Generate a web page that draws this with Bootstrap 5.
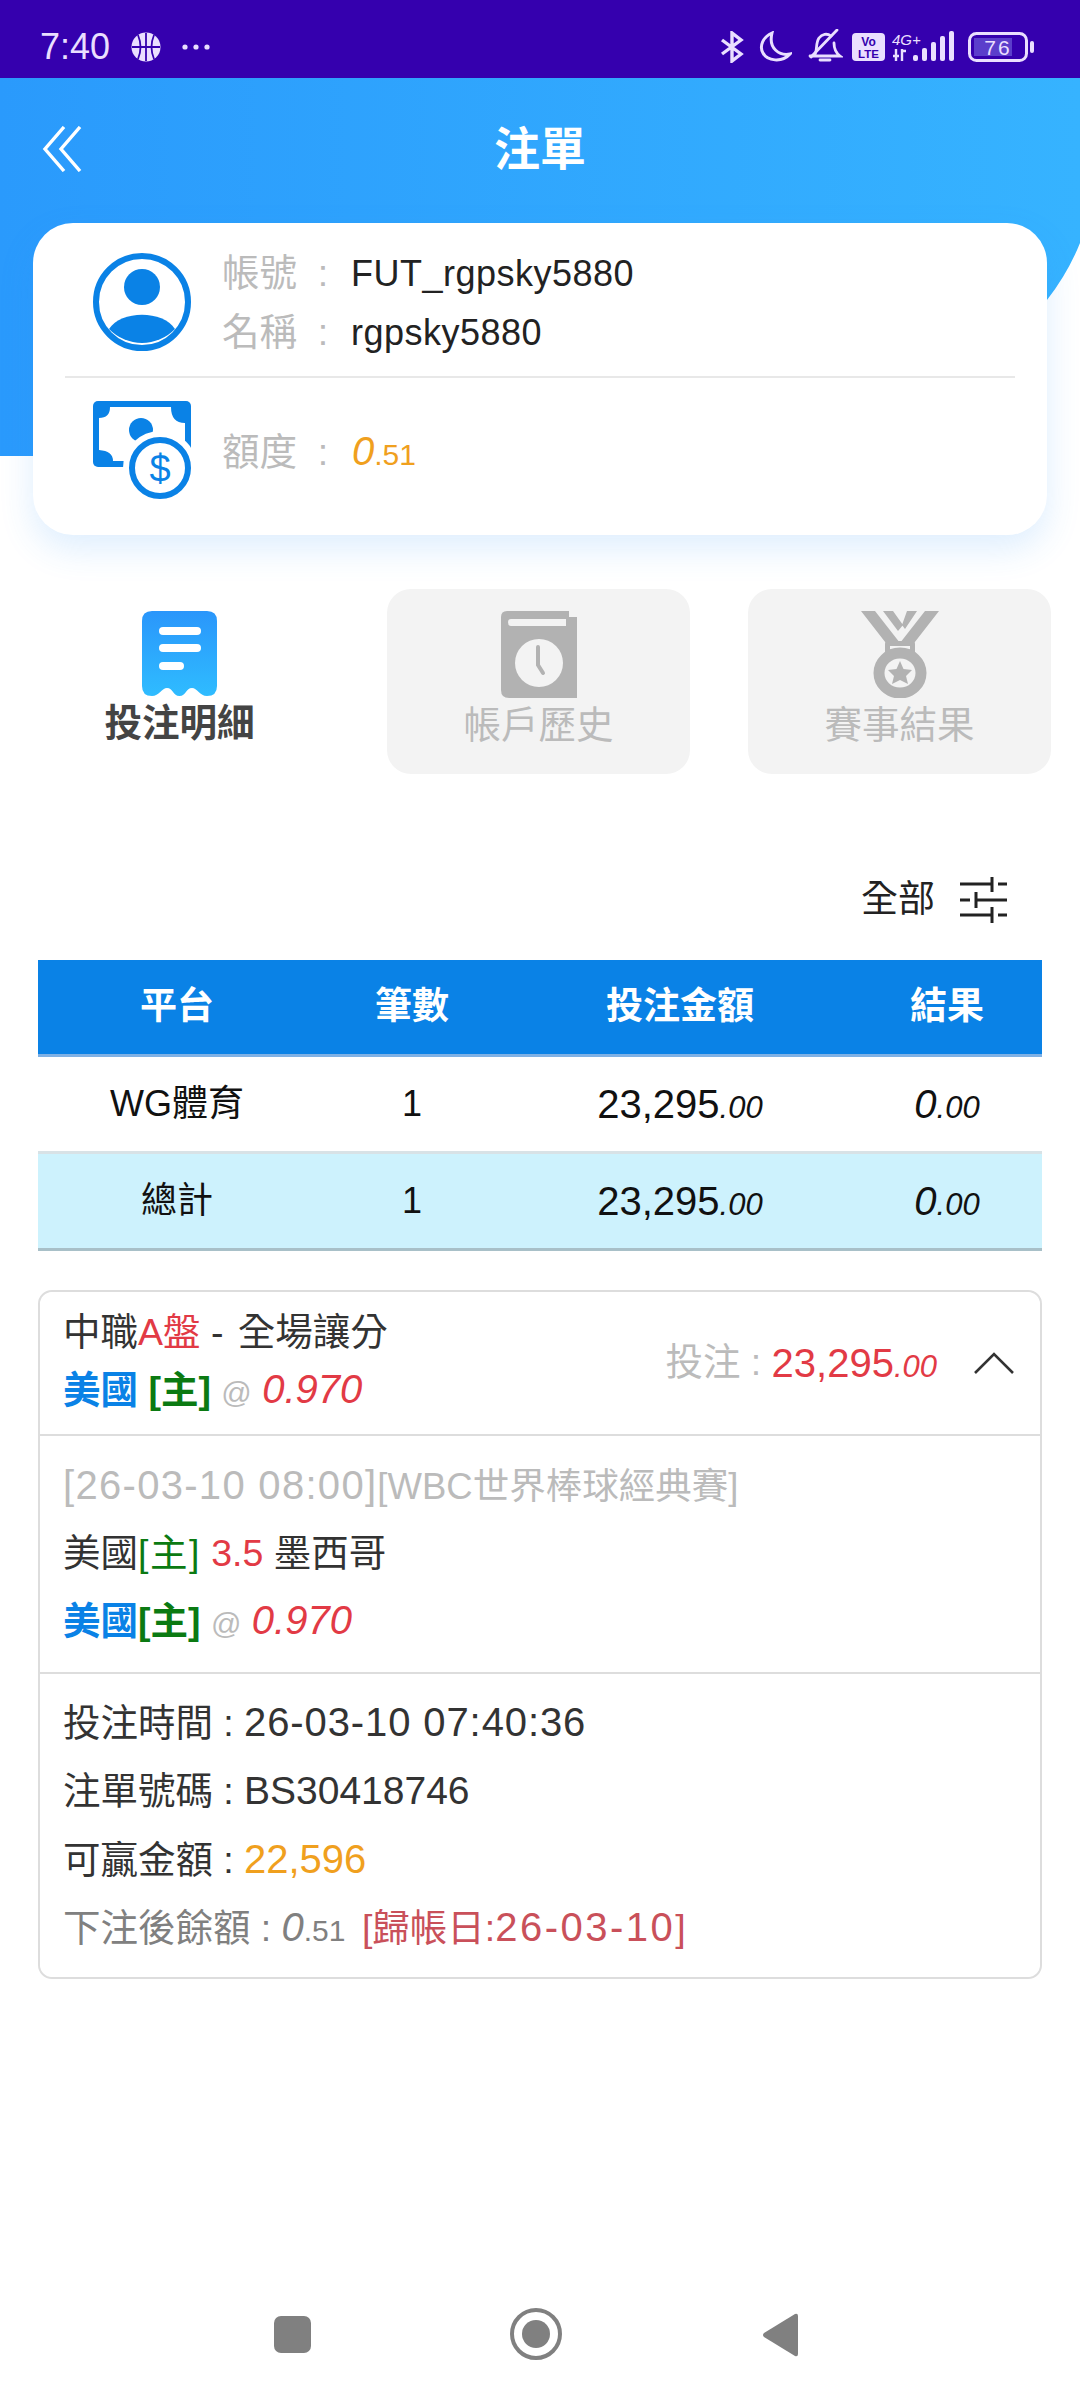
<!DOCTYPE html>
<html lang="zh-Hant"><head><meta charset="utf-8"><title>注單</title>
<link href="https://cdn.jsdelivr.net/npm/bootstrap@5.3.0/dist/css/bootstrap.min.css" rel="stylesheet">
<script src="https://cdn.jsdelivr.net/npm/bootstrap@5.3.0/dist/js/bootstrap.bundle.min.js"></script>
<style>
html,body{width:1080px;height:2401px;overflow:hidden;background:#fff}
body{font-family:"Liberation Sans","Noto Sans CJK TC",sans-serif;font-size:36px;color:#222;position:relative}
.sbar{height:78px;background:#3500ae;color:#eadfff;padding:15px 46px 0 40px;font-size:36px}
.sbar svg{display:block}
.hdr{height:378px;background:linear-gradient(90deg,#2a9afc,#36b3ff);padding:48px 42px 0;color:#fff;clip-path:path('M0 0H1080V165Q1068 195 1047 222L1040 300H40V378H0Z')}
.hdr-title{font-size:46px;font-weight:700;line-height:46px}
.hdr-side{width:40px}
.acct{margin:-233px 33px 0;height:312px;width:1014px;background:#fff;border-radius:40px;box-shadow:0 14px 34px rgba(50,150,250,.16);position:relative;padding:30px 32px 0}
.acct-top{height:125px;border-bottom:2px solid #e8e8e8;padding-left:28px}
.acct-labels{margin-left:31px;line-height:58px;margin-top:-9px}
.acct-lbl{color:#bbb;width:126px;display:inline-block;font-size:37.5px;white-space:nowrap}
.acct-lbl i{font-style:normal;display:inline-block;width:40px;margin-left:6px;text-align:center}
.acct-val{color:#222;letter-spacing:.5px;font-size:36px;margin-left:3px}
.acct-low{padding:23px 0 0 28px}
.acct-low .acct-labels{padding-top:30px}
.orange{color:#f0a01e}
.dec{font-size:31px;font-style:italic}
.dec-n{font-size:30px}
.oblique{font-style:italic}
.num{font-size:40px}
.tabs{margin:54px 28px 0 26px;gap:58px}
.tabbox{width:303px;height:185px;border-radius:24px;padding-top:22px;color:#bbb;font-size:37.500px;line-height:42px;text-align:center}
.tabbox svg{display:block;margin:0 auto 6px}
.tab-off{background:#f3f3f3}
.tab-on{color:#444;font-weight:700;padding-left:4px}
.filter{height:47px;margin:102px 72px 0 0;font-size:37px;line-height:47px;color:#222;gap:25px}
.tbl{width:1004px;margin:37px 38px 0;font-size:36px;table-layout:fixed;color:#111}
.tbl th{background:#0a82e6;color:#fff;height:95px;border-bottom:3px solid #7fb1e5;vertical-align:middle;text-align:center;padding:0;font-size:37px}
.tbl td{height:97px;vertical-align:middle;text-align:center;padding:0;border-bottom:3px solid #d8e2e6;background:#fff}
.tbl tr.sum td{background:#cdf2fd;border-bottom-color:#a8c0c8;height:97px}
.c1{width:278px}.c2{width:192px}.c3{width:344px}.c4{width:190px}
.betcard{width:1004px;margin:39px 38px 0;border:2px solid #ddd;border-radius:14px;font-size:37.5px}
.betcard .list-group-item{padding:0 23px;border-color:#ddd;border-width:0 0 2px;background:#fff}
.betcard .list-group-item:last-child{border-bottom:0}
.bet-head{height:144px}
.bet-line{line-height:57px;white-space:nowrap}
.l-dark{color:#333}
.red{color:#e23a45}
.blue{color:#0a82e6;font-weight:700}
.green{color:#0b7a12;font-weight:400;letter-spacing:1.5px}
.greenb{color:#0b7a12;font-weight:700}
.grey{color:#bbb}
.at{font-size:30px}
.cl{display:inline-block;width:31px;text-align:center}
.ls1{letter-spacing:.9px}
.ls2{letter-spacing:1.3px}
.ls3{letter-spacing:2.5px}
.n39{font-size:39px}
.n365{font-size:36.5px}
.wide-dash{letter-spacing:4px}
.bet-body{height:238px;padding-top:16px!important}
.bet-body .bet-line{line-height:67px}
.bet-foot{padding-top:15px!important;height:303px}
.bet-foot .bet-line{line-height:67.5px}
.bet-wager{gap:0;font-size:37.5px;white-space:nowrap}
.bet-wager svg{margin:0 3px 0 37px}
.mute{color:#808080}
.settle{color:#c9505a;margin-left:6px}
.navb{position:absolute;left:0;right:0;top:2300px;height:70px}
.navb svg{position:absolute;top:0}
</style></head>
<body>
<div class="sbar d-flex align-items-center justify-content-between">
  <div class="d-flex align-items-center">
    <span>7:40</span>
    <svg style="margin-left:21px" width="30" height="30" viewBox="0 0 30 30"><circle cx="15" cy="15" r="14.5" fill="#eadfff"/><path d="M15 1V29M1 15H29M7 3Q12 15 7 27M23 3Q18 15 23 27" stroke="#3500ae" stroke-width="1.8" fill="none"/></svg>
    <svg style="margin-left:20px" width="30" height="8" viewBox="0 0 30 8"><circle cx="4" cy="4" r="2.6" fill="#eadfff"/><circle cx="15" cy="4" r="2.6" fill="#eadfff"/><circle cx="26" cy="4" r="2.6" fill="#eadfff"/></svg>
  </div>
  <div class="d-flex align-items-center">
    <svg width="24" height="32" viewBox="0 0 24 32" fill="none" stroke="#eadfff" stroke-width="3.4"><path d="M2 9 21 23 12 30V2L21 9 2 23"/></svg>
    <svg style="margin-left:14px" width="34" height="32" viewBox="0 0 34 32" fill="none" stroke="#eadfff" stroke-width="3"><path d="M14 2C5 6 1 15 5 22C9 30 24 32 32 23C22 25 10 18 14 2Z"/></svg>
    <svg style="margin-left:15px" width="36" height="36" viewBox="0 0 36 36" fill="none" stroke="#eadfff" stroke-width="2.8"><path d="M7 27C11 22 8 15 12 9C15 5 20 4 24 7M27 14C27 20 29 24 33 27H3M13 31H23" stroke-linecap="round"/><path d="M4 28 30 1" stroke-linecap="round"/></svg>
    <svg style="margin-left:9px" width="33" height="28" viewBox="0 0 33 28"><rect width="33" height="28" rx="4" fill="#eadfff"/><text x="16.5" y="12.5" font-size="12" font-weight="700" text-anchor="middle" fill="#3500ae" font-family="Liberation Sans">Vo</text><text x="16.5" y="24.5" font-size="11.5" font-weight="700" text-anchor="middle" fill="#3500ae" font-family="Liberation Sans">LTE</text></svg>
    <svg style="margin-left:7px" width="64" height="32" viewBox="0 0 64 32"><text x="0" y="14" font-size="15" font-style="italic" fill="#eadfff" font-family="Liberation Sans">4G+</text><path d="M4 18V30M1 25H7M10 18V30M10 20H14" stroke="#eadfff" stroke-width="2.4" fill="none"/><rect x="21" y="24" width="5" height="6" rx="2" fill="#eadfff"/><rect x="30" y="17" width="5" height="13" rx="2" fill="#eadfff"/><rect x="39" y="11" width="5" height="19" rx="2" fill="#eadfff"/><rect x="48" y="5" width="5" height="25" rx="2" fill="#eadfff"/><rect x="57" y="0" width="5" height="30" rx="2" fill="#eadfff"/></svg>
    <svg style="margin-left:12px" width="66" height="30" viewBox="0 0 66 30"><rect x="1.5" y="1.5" width="57" height="27" rx="7" fill="none" stroke="#eadfff" stroke-width="3"/><rect x="6" y="6" width="38" height="18" fill="#5b3ecb"/><text x="30" y="23" font-size="21" text-anchor="middle" fill="#eadfff" font-family="Liberation Sans" letter-spacing="2">76</text><rect x="62" y="9" width="4" height="12" rx="2" fill="#eadfff"/></svg>
  </div>
</div>

<header class="hdr d-flex justify-content-between align-items-start">
  <div class="hdr-side"><svg class="d-block" width="40" height="46" viewBox="0 0 40 46" fill="none" stroke="#fff" stroke-width="3.4"><path d="M22 1 3 23 22 45M38 1 19 23 38 45"/></svg></div>
  <div class="hdr-title">注單</div>
  <div class="hdr-side"></div>
</header>

<section class="acct">
  <div class="acct-top d-flex">
    <svg width="98" height="98" viewBox="0 0 98 98"><circle cx="49" cy="49" r="46" fill="#fff" stroke="#0a82e6" stroke-width="6"/><circle cx="49" cy="34" r="18" fill="#0a82e6"/><path d="M16 76C28 57 70 57 82 76A46 46 0 0 1 16 76Z" fill="#0a82e6"/></svg>
    <div class="acct-labels">
      <div><span class="acct-lbl">帳號<i>:</i></span><span class="acct-val">FUT_rgpsky5880</span></div>
      <div><span class="acct-lbl">名稱<i>:</i></span><span class="acct-val">rgpsky5880</span></div>
    </div>
  </div>
  <div class="acct-low d-flex">
    <svg width="98" height="98" viewBox="0 0 98 98"><rect width="98" height="66" rx="5" fill="#0a82e6"/><path d="M6 17Q17 17 17 6H78Q78 22 92 22V60H20Q20 50 6 49Z" fill="#fff"/><circle cx="48" cy="29" r="12" fill="#0a82e6"/><circle cx="67" cy="67" r="37" fill="#fff"/><circle cx="67" cy="67" r="28" fill="#fff" stroke="#0a82e6" stroke-width="6"/><text x="67" y="81" font-size="38" text-anchor="middle" fill="#0a82e6" font-family="Liberation Sans">$</text></svg>
    <div class="acct-labels"><span class="acct-lbl">額度<i>:</i></span><span class="orange ms-1"><span class="oblique num">0</span><span class="dec-n">.51</span></span></div>
  </div>
</section>

<nav class="tabs d-flex">
  <div class="tabbox tab-on">
    <svg width="75" height="85" viewBox="0 0 75 85"><defs><linearGradient id="g1" x1="0" y1="0" x2="0" y2="1"><stop offset="0" stop-color="#2a96fb"/><stop offset="1" stop-color="#2fbcff"/></linearGradient></defs><path d="M10 0H65Q75 0 75 10V75Q75 85 65 85C58 85 55 77 50 77C44 77 44 85 37.5 85C31 85 31 77 25 77C20 77 17 85 10 85Q0 85 0 75V10Q0 0 10 0Z" fill="url(#g1)"/><rect x="17" y="16" width="42" height="8" rx="4" fill="#fff"/><rect x="17" y="33" width="42" height="8" rx="4" fill="#fff"/><rect x="17" y="51" width="25" height="8" rx="4" fill="#fff"/></svg>
    投注明細
  </div>
  <div class="tabbox tab-off">
    <svg width="76" height="87" viewBox="0 0 76 87"><path d="M6 0H68V6H76V87H8Q0 87 0 79V6Q0 0 6 0ZM10 8Q7 8 7 11Q7 15 10 15H65V8Z" fill="#b2b2b2" fill-rule="evenodd"/><circle cx="38" cy="52" r="24" fill="#f3f3f3"/><path d="M37 36V54L42 62" stroke="#b2b2b2" stroke-width="4" fill="none" stroke-linecap="round"/></svg>
    帳戶歷史
  </div>
  <div class="tabbox tab-off">
    <svg width="78" height="87" viewBox="0 0 78 87"><path d="M0 0H14L39 32L64 0H78L50 36L39 42L28 36Z M22 0H32L42 14L37 20Z M46 0H56L44 18 41 14Z" fill="#b2b2b2"/><rect x="24" y="30" width="30" height="16" rx="3" fill="#b2b2b2"/><rect x="29" y="35" width="20" height="8" fill="#f3f3f3"/><ellipse cx="39" cy="62" rx="21" ry="20" fill="#f3f3f3" stroke="#b2b2b2" stroke-width="11"/><path d="M39 50 42.5 58 51 59 45 65 47 73 39 69 31 73 33 65 27 59 35.500 58Z" fill="#b2b2b2"/></svg>
    賽事結果
  </div>
</nav>

<div class="filter d-flex justify-content-end align-items-center">
  <span>全部</span>
  <svg width="48" height="47" viewBox="0 0 48 47" fill="none" stroke="#222" stroke-width="3"><path d="M0 8H32M38 8H47M32 1V16M0 24H10M16 24H47M16 16V32M0 39H32M38 39H47M32 31V47"/></svg>
</div>

<table class="tbl table table-borderless mb-0">
  <colgroup><col class="c1"><col class="c2"><col class="c3"><col class="c4"></colgroup>
  <thead><tr><th>平台</th><th>筆數</th><th>投注金額</th><th>結果</th></tr></thead>
  <tbody>
    <tr><td>WG體育</td><td>1</td><td><span class="num">23,295</span><span class="dec">.00</span></td><td><span class="oblique num">0</span><span class="dec">.00</span></td></tr>
    <tr class="sum"><td>總計</td><td>1</td><td><span class="num">23,295</span><span class="dec">.00</span></td><td><span class="oblique num">0</span><span class="dec">.00</span></td></tr>
  </tbody>
</table>

<div class="betcard list-group">
  <div class="list-group-item bet-head d-flex justify-content-between align-items-center">
    <div>
      <div class="bet-line l-dark">中職<span class="red">A盤</span> <span class="wide-dash">-</span> 全場讓分</div>
      <div class="bet-line"><span class="blue">美國</span> <span class="greenb">[主]</span> <span class="grey at">@</span> <span class="red oblique num">0.970</span></div>
    </div>
    <div class="bet-wager d-flex align-items-center">
      <span class="grey">投注<span class="cl">:</span></span><span class="red"><span class="num">23,295</span><span class="dec">.00</span></span>
      <svg width="40" height="22" viewBox="0 0 40 22" fill="none" stroke="#333" stroke-width="2.6"><path d="M1 21 20 2 39 21"/></svg>
    </div>
  </div>
  <div class="list-group-item bet-body">
    <div class="bet-line grey"><span class="num ls2">[26-03-10 08:00]</span><span class="n365">[WBC世界棒球經典賽]</span></div>
    <div class="bet-line l-dark">美國<span class="green">[主]</span> <span class="red">3.5</span> 墨西哥</div>
    <div class="bet-line"><span class="blue">美國</span><span class="greenb">[主]</span> <span class="grey at">@</span> <span class="red oblique num">0.970</span></div>
  </div>
  <div class="list-group-item bet-foot">
    <div class="bet-line l-dark">投注時間<span class="cl">:</span><span class="num ls1">26-03-10 07:40:36</span></div>
    <div class="bet-line l-dark">注單號碼<span class="cl">:</span><span class="n39">BS30418746</span></div>
    <div class="bet-line l-dark">可贏金額<span class="cl">:</span><span class="orange num">22,596</span></div>
    <div class="bet-line mute">下注後餘額<span class="cl">:</span><span class="oblique num">0</span><span class="dec-n">.51</span> <span class="settle">[歸帳日:<span class="num ls3">26-03-10</span>]</span></div>
  </div>
</div>

<div class="navb">
  <svg style="left:274px;top:16px" width="37" height="37" viewBox="0 0 37 37"><rect width="37" height="37" rx="7" fill="#808080"/></svg>
  <svg style="left:510px;top:8px" width="52" height="52" viewBox="0 0 52 52"><circle cx="26" cy="26" r="24" fill="none" stroke="#808080" stroke-width="4"/><circle cx="26" cy="26" r="14" fill="#808080"/></svg>
  <svg style="left:762px;top:13px" width="36" height="44" viewBox="0 0 36 44"><path d="M33 1Q36 0 36 3V41Q36 44 33 43L2 24Q0 22 2 20Z" fill="#808080"/></svg>
</div>
</body></html>
